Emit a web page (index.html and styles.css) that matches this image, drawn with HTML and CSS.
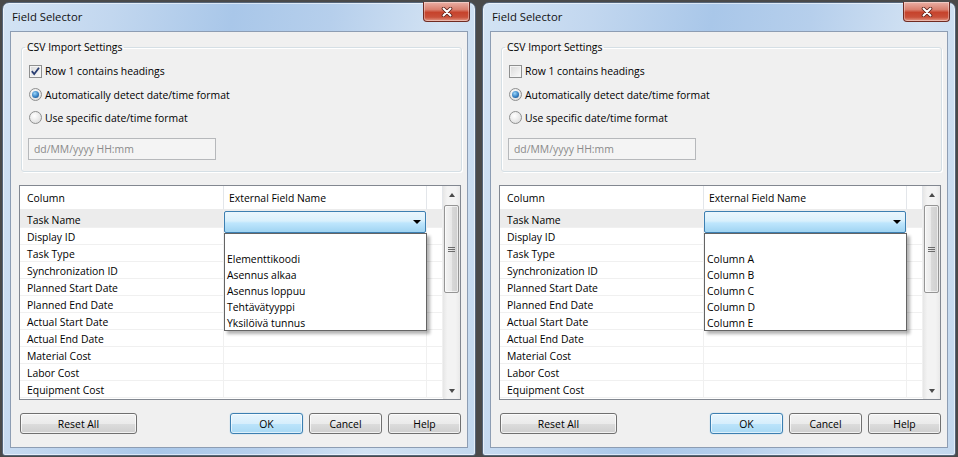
FILE: index.html
```html
<!DOCTYPE html>
<html lang="en">
<head>
<meta charset="UTF-8">
<title>Field Selector</title>
<link rel="stylesheet" href="styles.css">
</head>
<body>
<div class="desk">

<div class="window">
	<div class="titlebar">
		<span class="title">Field Selector</span>
		<span class="close"><svg width="12" height="10" viewBox="0 0 12 10"><path d="M2.5 1.5 L9.5 8.5 M9.5 1.5 L2.5 8.5" stroke="#5a2019" stroke-width="3.6" stroke-linecap="round"/><path d="M2.5 1.5 L9.5 8.5 M9.5 1.5 L2.5 8.5" stroke="#fff" stroke-width="2" stroke-linecap="round"/></svg></span>
	</div>
	<div class="client">
		<fieldset class="group">
			<legend>CSV Import Settings</legend>
			<div class="opt first"><span class="check"><svg width="11" height="11" viewBox="0 0 11 11"><path d="M1.8 5.2 L4.2 8 L9 1.8" fill="none" stroke="#2b3f73" stroke-width="1.8"/></svg></span>Row 1 contains headings</div>
			<div class="opt"><span class="radio"><i class="dot"></i></span>Automatically detect date/time format</div>
			<div class="opt"><span class="radio"></span>Use specific date/time format</div>
			<div class="textbox">dd/MM/yyyy HH:mm</div>
		</fieldset>

		<div class="grid">
			<div class="table">
				<div class="row head"><span>Column</span><span>External Field Name</span><span></span></div>
				<div class="row sel"><span>Task Name</span><span></span><span></span></div>
				<div class="row"><span>Display ID</span><span></span><span></span></div>
				<div class="row"><span>Task Type</span><span></span><span></span></div>
				<div class="row"><span>Synchronization ID</span><span></span><span></span></div>
				<div class="row"><span>Planned Start Date</span><span></span><span></span></div>
				<div class="row"><span>Planned End Date</span><span></span><span></span></div>
				<div class="row"><span>Actual Start Date</span><span></span><span></span></div>
				<div class="row"><span>Actual End Date</span><span></span><span></span></div>
				<div class="row"><span>Material Cost</span><span></span><span></span></div>
				<div class="row"><span>Labor Cost</span><span></span><span></span></div>
				<div class="row"><span>Equipment Cost</span><span></span><span></span></div>
			</div>
			<div class="vscroll">
				<div class="sbtn"><i class="up"></i></div>
				<div class="thumb"><svg width="7" height="7" viewBox="0 0 7 7"><path d="M0 1.5h7M0 3.5h7M0 5.5h7" stroke="#6b6b6b" stroke-width="1"/></svg></div>
				<div class="sbtn down"><i class="dn"></i></div>
			</div>
			<div class="combo"><i class="arrow"></i></div>
			<div class="list">
				<div class="item"></div>
				<div class="item">Elementtikoodi</div>
				<div class="item">Asennus alkaa</div>
				<div class="item">Asennus loppuu</div>
				<div class="item">Tehtävätyyppi</div>
				<div class="item">Yksilöivä tunnus</div>
			</div>
		</div>

		<div class="buttons">
			<span class="btn reset">Reset All</span>
			<span class="btn ok">OK</span>
			<span class="btn">Cancel</span>
			<span class="btn">Help</span>
		</div>
	</div>
</div>

<div class="window">
	<div class="titlebar">
		<span class="title">Field Selector</span>
		<span class="close"><svg width="12" height="10" viewBox="0 0 12 10"><path d="M2.5 1.5 L9.5 8.5 M9.5 1.5 L2.5 8.5" stroke="#5a2019" stroke-width="3.6" stroke-linecap="round"/><path d="M2.5 1.5 L9.5 8.5 M9.5 1.5 L2.5 8.5" stroke="#fff" stroke-width="2" stroke-linecap="round"/></svg></span>
	</div>
	<div class="client">
		<fieldset class="group">
			<legend>CSV Import Settings</legend>
			<div class="opt first"><span class="check"></span>Row 1 contains headings</div>
			<div class="opt"><span class="radio"><i class="dot"></i></span>Automatically detect date/time format</div>
			<div class="opt"><span class="radio"></span>Use specific date/time format</div>
			<div class="textbox">dd/MM/yyyy HH:mm</div>
		</fieldset>

		<div class="grid">
			<div class="table">
				<div class="row head"><span>Column</span><span>External Field Name</span><span></span></div>
				<div class="row sel"><span>Task Name</span><span></span><span></span></div>
				<div class="row"><span>Display ID</span><span></span><span></span></div>
				<div class="row"><span>Task Type</span><span></span><span></span></div>
				<div class="row"><span>Synchronization ID</span><span></span><span></span></div>
				<div class="row"><span>Planned Start Date</span><span></span><span></span></div>
				<div class="row"><span>Planned End Date</span><span></span><span></span></div>
				<div class="row"><span>Actual Start Date</span><span></span><span></span></div>
				<div class="row"><span>Actual End Date</span><span></span><span></span></div>
				<div class="row"><span>Material Cost</span><span></span><span></span></div>
				<div class="row"><span>Labor Cost</span><span></span><span></span></div>
				<div class="row"><span>Equipment Cost</span><span></span><span></span></div>
			</div>
			<div class="vscroll">
				<div class="sbtn"><i class="up"></i></div>
				<div class="thumb"><svg width="7" height="7" viewBox="0 0 7 7"><path d="M0 1.5h7M0 3.5h7M0 5.5h7" stroke="#6b6b6b" stroke-width="1"/></svg></div>
				<div class="sbtn down"><i class="dn"></i></div>
			</div>
			<div class="combo"><i class="arrow"></i></div>
			<div class="list">
				<div class="item"></div>
				<div class="item">Column A</div>
				<div class="item">Column B</div>
				<div class="item">Column C</div>
				<div class="item">Column D</div>
				<div class="item">Column E</div>
			</div>
		</div>

		<div class="buttons">
			<span class="btn reset">Reset All</span>
			<span class="btn ok">OK</span>
			<span class="btn">Cancel</span>
			<span class="btn">Help</span>
		</div>
	</div>
</div>

</div>
</body>
</html>
```
FILE: styles.css
```css
* { box-sizing: border-box; }
body { margin: 0; height: 457px; overflow: hidden; background: #4a4a4a; font-family: "Open Sans", "Noto Sans", sans-serif; font-size: 10.4px; color: #000; }
.desk { display: flex; gap: 6px; padding: 2px 0 0 2px; }

/* window frame */
.window { width: 474px; height: 454px; flex: none; display: flex; flex-direction: column; padding: 0 7px 7px 7px; border: 1px solid #56667a; border-radius: 7px 7px 3px 3px; background: linear-gradient(100deg, #d3e3f4 0%, #c2d7ef 20%, #a9c7e9 42%, #b6cfec 60%, #d2e2f3 80%, #c3d8ee 100%); box-shadow: inset 0 0 0 1px rgba(255,255,255,0.55); }
.titlebar { height: 28px; flex: none; display: flex; align-items: flex-start; padding-left: 2px; }
.title { line-height: 28px; font-size: 11.3px; color: #111; }
.close { margin: -1px -2px 0 auto; width: 47px; height: 20px; display: flex; align-items: center; justify-content: center; border: 1px solid #6f2b22; border-top: none; border-radius: 0 0 4px 4px; background: linear-gradient(#eab0a6 0%, #d9806f 40%, #c6432c 55%, #c9503a 80%, #e49a88 100%); box-shadow: inset 0 0 0 1px rgba(255,255,255,0.35); }

.client { height: 417px; flex: none; display: flex; flex-direction: column; background: #f0f0f0; border: 1px solid #8d9db3; }

/* group box */
.group { margin: 7px 5px 0 10px; padding: 4px 0 11px 7px; border: 1px solid #d5dfe5; border-radius: 3px; box-shadow: inset 1px 1px 0 #fff, 1px 1px 0 #fff; min-width: 0; }
.group legend { padding: 0 2px; margin-left: -4px; line-height: 16px; }
.opt { display: flex; align-items: center; gap: 3px; height: 23px; }
.opt.first { height: 24px; }
.check { width: 13px; height: 13px; display: flex; align-items: center; justify-content: center; border: 1px solid #8e8f8f; background: linear-gradient(135deg, #d9d9d9, #fbfbfb); box-shadow: inset 0 0 0 1px #f4f4f4; }
.radio { width: 13px; height: 13px; display: flex; align-items: center; justify-content: center; border: 1px solid #8e8f8f; border-radius: 50%; background: radial-gradient(circle at 40% 35%, #fff, #d6d6d6); }
.dot { width: 7px; height: 7px; border-radius: 50%; background: radial-gradient(circle at 40% 35%, #9ad6fb, #2f79bd 60%, #173f6e); }
.textbox { margin: 9px 0 0 -1px; width: 188px; height: 22px; padding-left: 5px; line-height: 20px; border: 1px solid #b6b8bb; background: #f4f4f4; color: #8a8a8a; }

/* grid */
.grid { position: relative; margin: 13px 6px 0 8px; height: 215px; flex: none; display: flex; border: 1px solid #828790; background: #fff; }
.table { flex: 1; overflow: hidden; }
.row { display: grid; grid-template-columns: 204px 203px 1fr; height: 17px; }
.row span { border-right: 1px solid #f0f0f0; border-bottom: 1px solid #f0f0f0; padding: 3px 0 0 7px; line-height: 14px; white-space: nowrap; }
.row.head { height: 24px; }
.row.head span { padding-top: 1px; line-height: 22px; border-right-color: #e3e6ea; border-bottom-color: #ececec; }
.row.head span:nth-child(2) { padding-left: 5px; }
.row.sel span { background: #ececec; }

.vscroll { width: 17px; flex: none; display: flex; flex-direction: column; background: linear-gradient(to right, #e6e6e6, #f3f3f3 25%, #f3f3f3 75%, #e9e9e9); }
.sbtn { height: 17px; display: flex; align-items: center; justify-content: center; }
.sbtn.down { margin-top: auto; }
.up { width: 0; height: 0; border-left: 3.5px solid transparent; border-right: 3.5px solid transparent; border-bottom: 4px solid #4b4b4b; }
.dn { width: 0; height: 0; border-left: 3.5px solid transparent; border-right: 3.5px solid transparent; border-top: 4px solid #4b4b4b; }
.thumb { margin: 2px 1px 0 1px; height: 88px; display: flex; align-items: center; justify-content: center; border: 1px solid #959595; border-radius: 2px; background: linear-gradient(to right, #f4f4f4, #e8e8e8 50%, #d9d9d9 50%, #cfcfcf); box-shadow: inset 0 0 0 1px rgba(255,255,255,0.6); }

/* open combo over the grid */
.combo { position: absolute; left: 204px; top: 25px; width: 202px; height: 22px; display: flex; align-items: center; justify-content: flex-end; padding-right: 4px; border: 1px solid #3c7fb1; border-radius: 2px; background: linear-gradient(#eaf6fd 0%, #d9f0fc 45%, #bee6fd 55%, #a0d4f2 100%); }
.arrow { width: 0; height: 0; border-left: 4px solid transparent; border-right: 4px solid transparent; border-top: 4px solid #000; }
.list { position: absolute; left: 204px; top: 47px; width: 203px; height: 98px; padding-top: 1px; border: 1px solid #646464; background: #fff; box-shadow: 3px 3px 3px rgba(0,0,0,0.3); }
.item { height: 16px; line-height: 16px; padding-left: 2px; white-space: nowrap; }

/* buttons */
.buttons { display: flex; gap: 6px; margin: 13px 6px 0 9px; }
.btn { width: 73px; height: 21px; display: flex; align-items: center; justify-content: center; border: 1px solid #707070; border-radius: 3px; background: linear-gradient(#f2f2f2 0%, #ebebeb 50%, #dddddd 50%, #cfcfcf 100%); box-shadow: inset 0 0 0 1px rgba(255,255,255,0.7); }
.btn.reset { width: 117px; margin-right: auto; }
.btn.ok { border-color: #3c7fb1; background: linear-gradient(#e8f5fd 0%, #d6eefc 50%, #bce4fb 50%, #a9d9f4 100%); box-shadow: inset 0 0 0 1px rgba(255,255,255,0.6), 0 0 1px #5fb0e0; }
```
